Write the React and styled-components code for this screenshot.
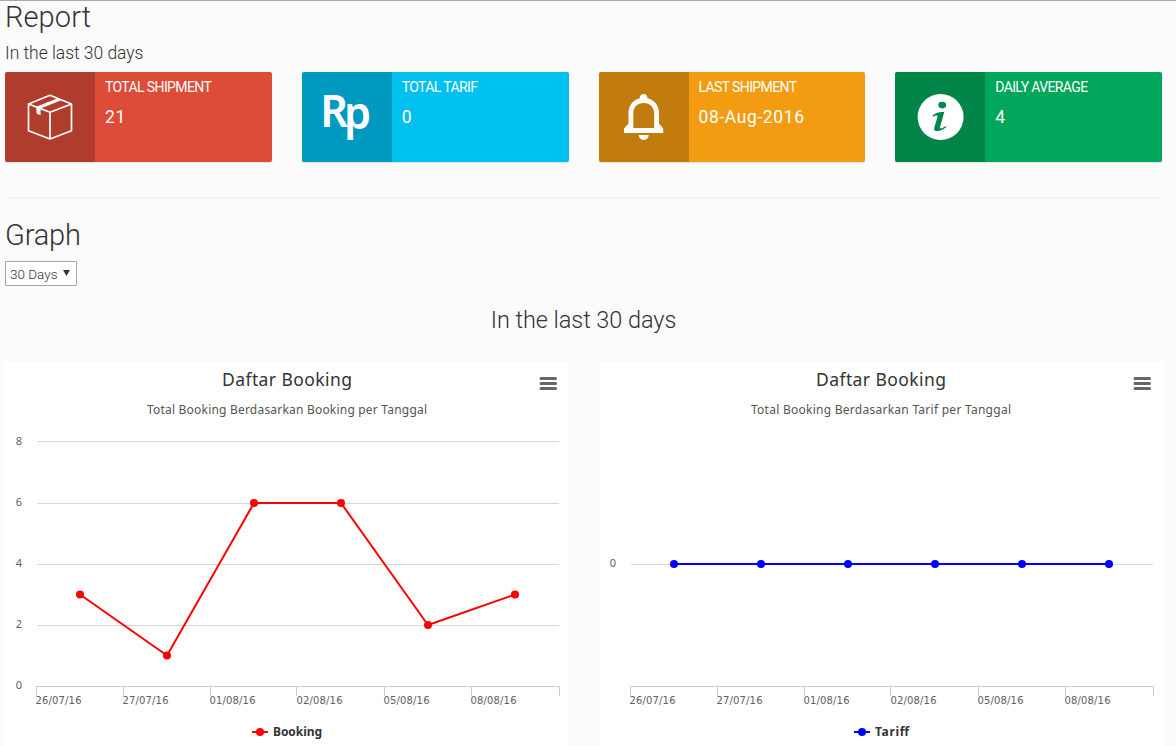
import React from "react";
import styled, { createGlobalStyle } from "styled-components";

const GlobalStyle = createGlobalStyle`
  * { box-sizing: border-box; }
  html, body { margin: 0; padding: 0; height: 746px; overflow: hidden; background: #fbfbfb; }
  body { font-family: Roboto, "Open Sans", sans-serif; color: #333; }
`;

const Page = styled.main`
  height: 746px;
  overflow: hidden;
  border-top: 1px solid #a9a9a9;
  padding: 0 13px 0 5px;
`;
const Heading = styled.h1`
  margin: 0;
  height: ${(p) => p.$height}px;
  line-height: 33px;
  font-size: 29px;
  font-weight: 300;
  letter-spacing: ${(p) => p.$spacing}px;
`;
const SubHeading = styled.h2`
  margin: 0;
  height: 38px;
  line-height: 38px;
  font-size: 17.5px;
  font-weight: 300;
  letter-spacing: -0.03px;
`;
const CardGrid = styled.section`
  display: grid;
  grid-template-columns: repeat(4, 1fr);
  gap: 30px;
  width: 1157px;
`;
const Card = styled.article`
  display: flex;
  height: 90px;
  border-radius: 2px;
  overflow: hidden;
  color: #fff;
  background: ${(p) => p.$color};
  box-shadow: 0 1px 1px rgba(0, 0, 0, 0.1);
`;
const CardIcon = styled.div`
  width: 90px;
  height: 90px;
  background: rgba(0, 0, 0, 0.2);
  svg { display: block; }
`;
const CardBody = styled.div`
  padding: 5px 10px;
`;
const CardLabel = styled.div`
  height: 20px;
  line-height: 20px;
  font-size: 14px;
  letter-spacing: -0.62px;
  white-space: nowrap;
`;
const CardValue = styled.div`
  margin-top: 10px;
  line-height: 21px;
  font-size: 17.5px;
  letter-spacing: 0.6px;
`;
const Rule = styled.hr`
  width: 1157px;
  height: 1px;
  margin: 35px 0 21px;
  border: 0;
  background: #eee;
`;
const Select = styled.button`
  display: flex;
  align-items: center;
  justify-content: space-between;
  width: 72px;
  height: 25px;
  padding: 1px 6px 0 4px;
  border: 1px solid #a5a5a5;
  border-radius: 1px;
  background: #fff;
  color: #333;
  font: 300 13.5px Roboto, sans-serif;
  svg { display: block; margin-top: -3px; }
`;
const GraphTitle = styled.h3`
  margin: 19px 0 26px;
  width: 1157px;
  height: 31px;
  line-height: 31px;
  text-align: center;
  font-size: 23.5px;
  font-weight: 300;
  letter-spacing: -0.06px;
`;
const ChartGrid = styled.section`
  display: grid;
  grid-template-columns: 564px 564px;
  gap: 30px;
`;
const ChartPanel = styled.figure`
  margin: 0;
  height: 400px;
  background: #fff;
`;
const ChartSvg = styled.svg`
  display: block;
  font-family: "Noto Sans", "Open Sans", sans-serif;
`;

const BoxIcon = () => (
  <svg width="90" height="90" fill="none" stroke="#fff" strokeWidth="1.7" strokeLinejoin="round">
    <path d="M45 23.3 66.5 32v26.7L45 67 23.5 58.7V32zM23.5 32 45 40.3 66.5 32M45 40.3V67" />
    <path d="M31.2 34.8 52.8 26.3 57 28 35.6 36.5V43l-4-1.2z" fill="#fff" stroke="none" />
  </svg>
);
const RupiahIcon = () => (
  <svg width="90" height="90" fill="#fff" fontFamily="'Noto Sans'" fontWeight="600" fontSize="45">
    <text transform="translate(18.2 55) scale(.96 1)" letterSpacing="-4.2">R<tspan dy="2">p</tspan></text>
  </svg>
);
const BellIcon = () => (
  <svg width="90" height="90" fill="#fff">
    <path d="M44.6 22a3.8 3.8 0 0 1 3.8 4.2C55.5 28 60 33.5 60 41v10.5l4.2 5V61H25v-4.5l4.5-5V41c0-7.5 4.3-13 11.3-14.8A3.8 3.8 0 0 1 44.6 22zM44.6 31C38 31 34.3 35.5 34.3 41.5V56h20.9V41.5C55.2 35.5 51.3 31 44.6 31z" fillRule="evenodd" />
    <path d="M39.7 63h10a5 5 0 0 1-10 0z" />
  </svg>
);
const InfoIcon = () => (
  <svg width="90" height="90">
    <circle cx="45.6" cy="45" r="23" fill="#fff" />
    <ellipse cx="47.2" cy="33.1" rx="3.9" ry="3.3" fill="#008749" />
    <path d="M37.5 43.6c3.5-3 7-4.2 11.8-3.5l-4.2 15c-.5 1.8 1.2 2.1 5.8-1.1l.4 1c-3.5 3.2-7.4 4.5-10.7 3.9-1.6-.4-1.7-1.7-1.2-3.5l3-10.5c.5-2-1.4-1.8-4.4-.3z" fill="#008749" />
  </svg>
);

const cards = [
  { color: "#dd4b39", label: "TOTAL SHIPMENT", value: "21", Icon: BoxIcon },
  { color: "#00c0ef", label: "TOTAL TARIF", value: "0", Icon: RupiahIcon },
  { color: "#f39c12", label: "LAST SHIPMENT", value: "08-Aug-2016", Icon: BellIcon },
  { color: "#00a65a", label: "DAILY AVERAGE", value: "4", Icon: InfoIcon },
];

const dates = ["26/07/16", "27/07/16", "01/08/16", "02/08/16", "05/08/16", "08/08/16"];

function Chart({ subtitle, subtitleWidth, ticks, points, color, legend, legendX, legendWidth }) {
  const coords = points.map((y, i) => [75 + 87 * i, y]);
  return (
    <ChartPanel>
      <ChartSvg width="564" height="400">
        <text x="217" y="24" fontSize="17.5" fill="#333" textLength="130">Daftar Booking</text>
        <text x={282 - subtitleWidth / 2} y="52" fontSize="12" fill="#555" textLength={subtitleWidth}>{subtitle}</text>
        <g stroke="#666" strokeWidth="3" strokeLinecap="round">
          <path d="M536 16.5h14.5M536 21.5h14.5M536 26.5h14.5" />
        </g>
        {ticks.map(([label, y]) => (
          <g key={label}>
            {y < 324 && <path d={`M32 ${y + 0.5}h522`} stroke="#d8d8d8" />}
            <text x="17" y={y === 79 ? 83 : y + 3} fontSize="11" fill="#606060" textAnchor="end">{label}</text>
          </g>
        ))}
        <path d="M31 324.5h524M31.5 324v10M118.5 324v10M205.5 324v10M291.5 324v10M379.5 324v10M466.5 324v10M554.5 324v10" stroke="#c0d0e0" fill="none" />
        {dates.map((d, i) => (
          <text key={d} x={30.5 + 87 * i} y="342" fontFamily="'DejaVu Sans'" fontSize="10" fill="#606060" textLength="46">{d}</text>
        ))}
        <polyline points={coords.map((c) => c.join(",")).join(" ")} fill="none" stroke={color} strokeWidth="2" strokeLinejoin="round" />
        {coords.map(([x, y]) => <circle key={x} cx={x} cy={y} r="4" fill={color} />)}
        <path d={`M${legendX} 370h16`} stroke={color} strokeWidth="2" />
        <circle cx={legendX + 8} cy="370" r="4" fill={color} />
        <text x={legendX + 21} y="374" fontSize="12" fontWeight="700" fill="#333" textLength={legendWidth}>{legend}</text>
      </ChartSvg>
    </ChartPanel>
  );
}

export default function App() {
  return (
    <>
      <GlobalStyle />
      <Page>
        <Heading $height={33} $spacing={0.1}>Report</Heading>
        <SubHeading>In the last 30 days</SubHeading>
        <CardGrid>
          {cards.map(({ color, label, value, Icon }) => (
            <Card key={label} $color={color}>
              <CardIcon><Icon /></CardIcon>
              <CardBody>
                <CardLabel>{label}</CardLabel>
                <CardValue>{value}</CardValue>
              </CardBody>
            </Card>
          ))}
        </CardGrid>
        <Rule />
        <Heading $height={42} $spacing={-0.2}>Graph</Heading>
        <Select>
          30 Days
          <svg width="7" height="6"><path d="M0 0h7L3.5 6z" fill="#333" /></svg>
        </Select>
        <GraphTitle>In the last 30 days</GraphTitle>
        <ChartGrid>
          <Chart
            subtitle="Total Booking Berdasarkan Booking per Tanggal" subtitleWidth={280}
            ticks={[["8", 79], ["6", 141], ["4", 202], ["2", 263], ["0", 324]]}
            points={[232.5, 293.5, 141, 141, 263, 232.5]}
            color="#ff0000" legend="Booking" legendX={247} legendWidth={49}
          />
          <Chart
            subtitle="Total Booking Berdasarkan Tarif per Tanggal" subtitleWidth={260}
            ticks={[["0", 202]]}
            points={[202, 202, 202, 202, 202, 202]}
            color="#0000ff" legend="Tariff" legendX={255} legendWidth={34}
          />
        </ChartGrid>
      </Page>
    </>
  );
}
